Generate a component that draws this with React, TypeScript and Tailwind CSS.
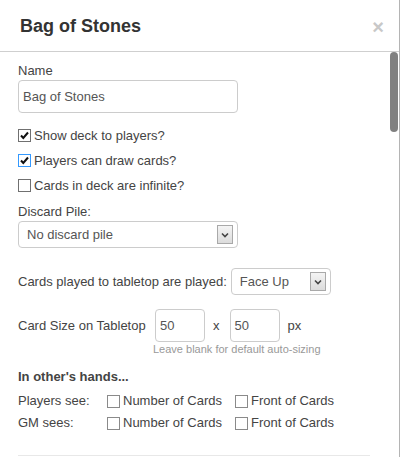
import React from "react";

const Box = ({ checked, focus, light }: { checked?: boolean; focus?: boolean; light?: boolean }) => (
  <span
    className={
      "flex h-[13px] w-[13px] shrink-0 items-center justify-center border bg-white " +
      (focus ? "border-[#3399ff]" : light ? "border-[#8a8a8a]" : "border-[#707070]")
    }
  >
    {checked && (
      <svg viewBox="0 0 11 11" className="h-[11px] w-[11px]">
        <path d="M2 5.5 L4.3 8 L9 2.5" fill="none" stroke="#111" strokeWidth="2" />
      </svg>
    )}
  </span>
);

const Select = ({ value, width }: { value: string; width: string }) => (
  <div
    className={
      "flex h-[27px] items-center justify-between rounded-[4px] border border-[#cccccc] bg-white pl-[8px] pr-[4px] text-[13px] text-[#555] " +
      width
    }
  >
    <span>{value}</span>
    <span className="flex h-[19px] w-[16px] items-center justify-center border border-[#a9a9a9] bg-gradient-to-b from-[#f4f4f4] to-[#dcdcdc]">
      <svg viewBox="0 0 8 6" className="h-[6px] w-[8px]">
        <path d="M1 1.5 L4 4.5 L7 1.5" fill="none" stroke="#444" strokeWidth="1.6" />
      </svg>
    </span>
  </div>
);

const CheckRow = ({ label, checked, focus }: { label: string; checked?: boolean; focus?: boolean }) => (
  <div className="flex h-[25px] items-center gap-[3px]">
    <Box checked={checked} focus={focus} />
    <span>{label}</span>
  </div>
);

const SeeRow = ({ label }: { label: string }) => (
  <div className="flex h-[22px] items-center">
    <span className="w-[89px]">{label}</span>
    <Box light />
    <span className="ml-[3px] w-[112px]">Number of Cards</span>
    <Box light />
    <span className="ml-[3px]">Front of Cards</span>
  </div>
);

export default function App() {
  return (
    <div
      className="h-[457px] w-[401px] overflow-hidden bg-white text-[13px] leading-[18px] text-[#444]"
      style={{ fontFamily: '"Liberation Sans", Arial, sans-serif' }}
    >
      <div className="flex h-full w-[400px] flex-col border-r border-[#b4b4b4]">
        <header className="flex h-[52px] shrink-0 items-center justify-between border-b border-[#cfcfcf] pl-[20px] pr-[15px]">
          <h3 className="text-[18px] font-bold text-[#333]">Bag of Stones</h3>
          <span className="mt-[3px] text-[20px] leading-none font-bold text-[#c8c8c8]">×</span>
        </header>

        <div className="flex min-h-0 flex-1">
          <div className="flex-1 pl-[18px] pt-[10px]">
            <label className="block h-[18px]">Name</label>
            <div className="flex h-[33px] w-[220px] items-center rounded-[4px] border border-[#cccccc] pl-[4px] text-[#555]">
              Bag of Stones
            </div>

            <div className="mt-[10px]">
              <CheckRow label="Show deck to players?" checked />
              <CheckRow label="Players can draw cards?" checked focus />
              <CheckRow label="Cards in deck are infinite?" />
            </div>

            <label className="mt-[5px] block h-[18px]">Discard Pile:</label>
            <Select value="No discard pile" width="w-[220px]" />

            <div className="mt-[20px] flex items-center">
              <span>Cards played to tabletop are played:</span>
              <div className="ml-[4px]">
                <Select value="Face Up" width="w-[100px]" />
              </div>
            </div>

            <div className="mt-[14px] flex items-center">
              <span className="w-[137px]">Card Size on Tabletop</span>
              <div className="flex h-[33px] w-[50px] items-center rounded-[4px] border border-[#cccccc] pl-[4px] text-[#555]">
                50
              </div>
              <span className="ml-[8px] mr-[10px]">x</span>
              <div className="flex h-[33px] w-[50px] items-center rounded-[4px] border border-[#cccccc] pl-[4px] text-[#555]">
                50
              </div>
              <span className="ml-[8px]">px</span>
            </div>
            <p className="h-[14px] pl-[135px] text-[11px] leading-[14px] text-[#999]">
              Leave blank for default auto-sizing
            </p>

            <p className="mt-[12px] h-[18px] font-bold text-[#444]">In other's hands...</p>
            <div className="mt-[4px]">
              <SeeRow label="Players see:" />
              <SeeRow label="GM sees:" />
            </div>

            <div className="mt-[21px] w-[352px] border-t border-[#e8e8e8]" />
          </div>

          <div className="w-[10px] shrink-0 px-[1px]">
            <div className="h-[80px] w-[8px] rounded-full bg-[#808080]" />
          </div>
        </div>
      </div>
    </div>
  );
}
